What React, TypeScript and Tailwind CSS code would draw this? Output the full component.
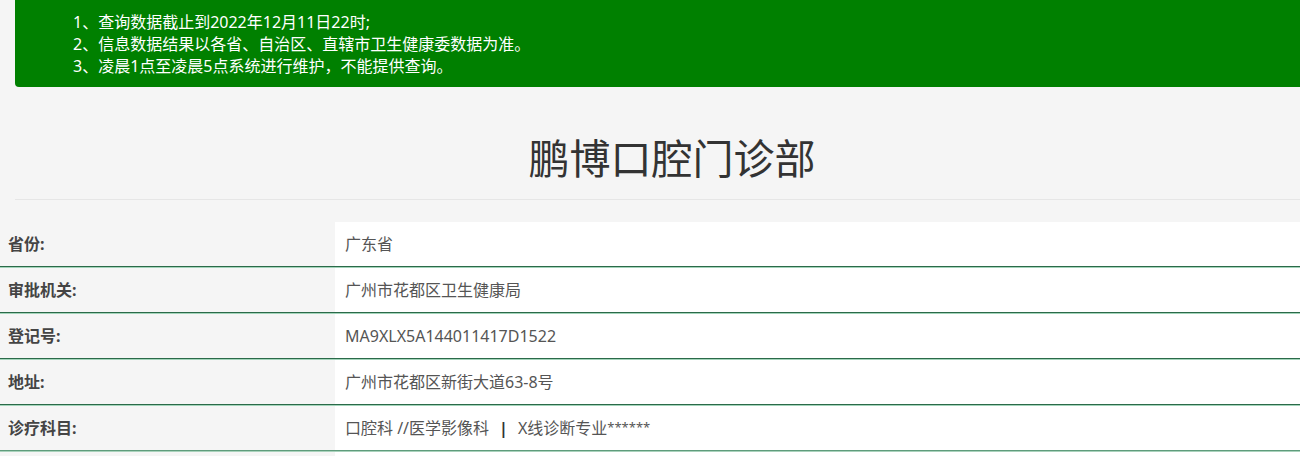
import React from "react"

const rows = [
  { label: "省份:", value: "广东省" },
  { label: "审批机关:", value: "广州市花都区卫生健康局" },
  { label: "登记号:", value: "MA9XLX5A144011417D1522" },
  { label: "地址:", value: "广州市花都区新街大道63-8号" },
]

const notes = [
  "1、查询数据截止到2022年12月11日22时;",
  "2、信息数据结果以各省、自治区、直辖市卫生健康委数据为准。",
  "3、凌晨1点至凌晨5点系统进行维护，不能提供查询。",
]

function Divider({ last }: { last?: boolean }) {
  return last ? (
    <div>
      <div className="h-[1px] bg-[#5f9c7c]" />
      <div className="h-[1px] bg-[#a9d2bc]" />
    </div>
  ) : (
    <div>
      <div className="h-[1px] bg-[#2b6a49]" />
      <div className="h-[1px] bg-[#a3d4ba]" />
    </div>
  )
}

export default function App() {
  return (
    <div
      className="w-[1300px] h-[456px] overflow-hidden bg-[#f5f5f5]"
      style={{ fontFamily: '"Noto Sans", "Noto Sans CJK SC", sans-serif' }}
    >
      {/* notice banner */}
      <div className="ml-[15px] w-[1314px] h-[87px] bg-[#008000] rounded-bl-[4px] pl-[58px] pt-[11px]">
        {notes.map((n) => (
          <div key={n} className="text-white text-[16px] leading-[22px] whitespace-nowrap">
            {n}
          </div>
        ))}
      </div>

      {/* title */}
      <div className="ml-[15px] w-[1314px] mt-[49px] pb-[19px] border-b border-[#e6e6e6] text-center">
        <h1 className="text-[41px] leading-[44px] text-[#333] font-normal">鹏博口腔门诊部</h1>
      </div>

      {/* detail table */}
      <div className="mt-[22px]">
        {rows.map((r) => (
          <div key={r.label}>
            <div className="grid grid-cols-[335px_1fr]">
              <div className="h-[44px] flex items-center pl-[8px] text-[16px] font-bold text-[#444]">
                {r.label}
              </div>
              <div className="h-[44px] flex items-center pl-[10px] bg-white text-[16px] text-[#555] whitespace-nowrap">
                {r.value}
              </div>
            </div>
            <Divider />
          </div>
        ))}
        <div className="grid grid-cols-[335px_1fr]">
          <div className="h-[44px] flex items-center pl-[8px] text-[16px] font-bold text-[#444]">诊疗科目:</div>
          <div className="h-[44px] flex items-center pl-[10px] bg-white text-[16px] text-[#555] whitespace-nowrap">
            口腔科 //医学影像科
            <span className="mx-[10px] font-bold text-[#333]">|</span>
            X线诊断专业<span className="text-[13px] self-start mt-[12px]">******</span>
          </div>
        </div>
        <Divider last />
        <div className="grid grid-cols-[335px_1fr]">
          <div className="h-[45px]" />
          <div className="h-[45px] bg-white" />
        </div>
      </div>
    </div>
  )
}
